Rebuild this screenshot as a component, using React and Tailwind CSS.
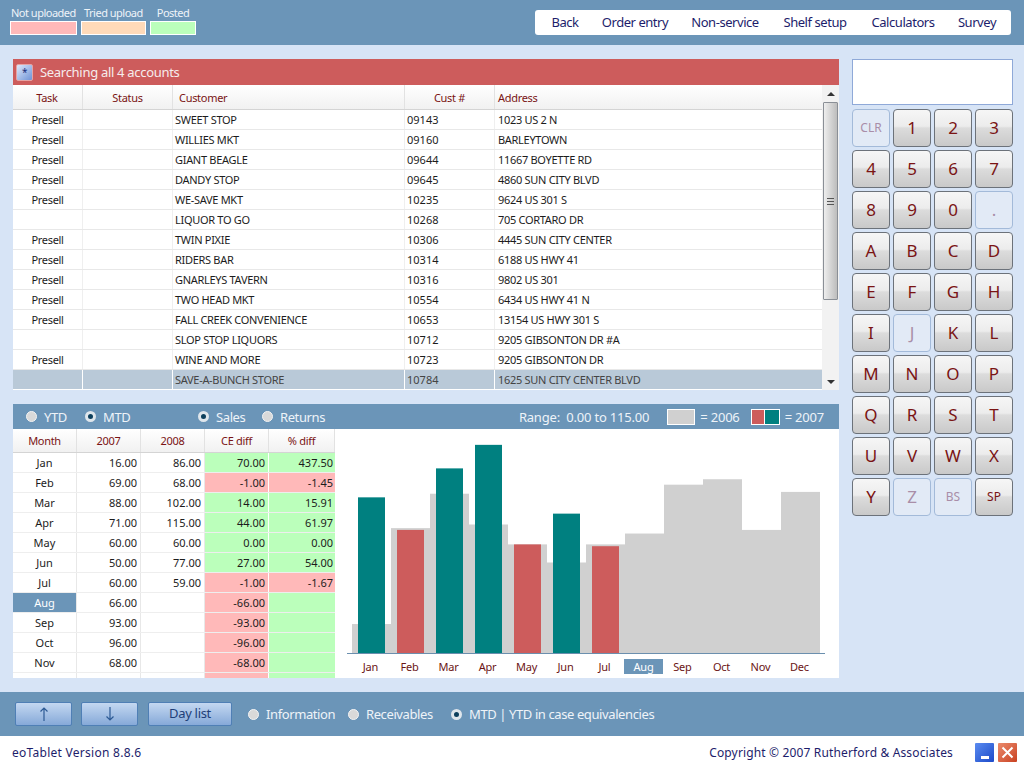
const rows = [
  ['Presell', 'SWEET STOP', '09143', '1023 US 2 N'],
  ['Presell', 'WILLIES MKT', '09160', 'BARLEYTOWN'],
  ['Presell', 'GIANT BEAGLE', '09644', '11667 BOYETTE RD'],
  ['Presell', 'DANDY STOP', '09645', '4860 SUN CITY BLVD'],
  ['Presell', 'WE-SAVE MKT', '10235', '9624 US 301 S'],
  ['', 'LIQUOR TO GO', '10268', '705 CORTARO DR'],
  ['Presell', 'TWIN PIXIE', '10306', '4445 SUN CITY CENTER'],
  ['Presell', 'RIDERS BAR', '10314', '6188 US HWY 41'],
  ['Presell', 'GNARLEYS TAVERN', '10316', '9802 US 301'],
  ['Presell', 'TWO HEAD MKT', '10554', '6434 US HWY 41 N'],
  ['Presell', 'FALL CREEK CONVENIENCE', '10653', '13154 US HWY 301 S'],
  ['', 'SLOP STOP LIQUORS', '10712', '9205 GIBSONTON DR #A'],
  ['Presell', 'WINE AND MORE', '10723', '9205 GIBSONTON DR'],
  ['', 'SAVE-A-BUNCH STORE', '10784', '1625 SUN CITY CENTER BLVD'],
];

const months = [
  ['Jan', '16.00', '86.00', '70.00', '437.50', 1],
  ['Feb', '69.00', '68.00', '-1.00', '-1.45', 0],
  ['Mar', '88.00', '102.00', '14.00', '15.91', 1],
  ['Apr', '71.00', '115.00', '44.00', '61.97', 1],
  ['May', '60.00', '60.00', '0.00', '0.00', 1],
  ['Jun', '50.00', '77.00', '27.00', '54.00', 1],
  ['Jul', '60.00', '59.00', '-1.00', '-1.67', 0],
  ['Aug', '66.00', '', '-66.00', '', 0],
  ['Sep', '93.00', '', '-93.00', '', 0],
  ['Oct', '96.00', '', '-96.00', '', 0],
  ['Nov', '68.00', '', '-68.00', '', 0],
  ['', '', '', '', '', 0],
];

const monthNames = ['Jan', 'Feb', 'Mar', 'Apr', 'May', 'Jun', 'Jul', 'Aug', 'Sep', 'Oct', 'Nov', 'Dec'];
const gray = [16, 69, 88, 71, 60, 50, 60, 66, 93, 96, 68, 89];
const cur = [86, 68, 102, 115, 60, 77, 59];
const keys = ['CLR', '1', '2', '3', '4', '5', '6', '7', '8', '9', '0', '.', 'A', 'B', 'C', 'D', 'E', 'F', 'G', 'H', 'I', 'J', 'K', 'L', 'M', 'N', 'O', 'P', 'Q', 'R', 'S', 'T', 'U', 'V', 'W', 'X', 'Y', 'Z', 'BS', 'SP'];
const disabled = ['CLR', '.', 'J', 'Z', 'BS'];

function Radio({ on, label, className = '' }) {
  return (
    <span className={`flex items-center gap-[7px] text-[13px] text-[#eef3f8] tracking-[-0.4px] ${className}`}>
      {on ? (
        <span className="w-[11px] h-[11px] rounded-full bg-[#0c3f5c] border-[3px] border-[#dfe6ec]" />
      ) : (
        <span className="w-[11px] h-[11px] rounded-full bg-[#d9d9d9] border border-[#f4f4f4]" />
      )}
      <span className="pt-[2px]">{label}</span>
    </span>
  );
}

function NavButton({ children, className }) {
  return (
    <div className={`h-[24px] flex items-center justify-center rounded-[2px] border border-[#4f7fb5] bg-gradient-to-b from-[#c4d8f1] to-[#86a9d8] text-[#1f3f78] text-[13px] tracking-[-0.3px] ${className}`}>
      {children}
    </div>
  );
}

function Arrow({ down }) {
  return (
    <svg width="12" height="16" viewBox="0 0 12 16" fill="none" stroke="#2d5a94" strokeWidth="1.2">
      {down ? <path d="M6 1v13M2.5 10.5L6 14l3.5-3.5" /> : <path d="M6 15V2M2.5 5.5L6 2l3.5 3.5" />}
    </svg>
  );
}

export default function App() {
  return (
    <div className="w-[1024px] h-[768px] flex flex-col overflow-hidden bg-[#d7e4f6] font-['Noto_Sans','DejaVu_Sans',sans-serif]">
      {/* top bar */}
      <div className="h-[45px] shrink-0 bg-[#6b95b8] flex items-start justify-between pl-[10px] pr-[13px]">
        <div className="flex gap-[4px] pt-[6px] tracking-[-0.5px]">
          <div className="w-[67px] flex flex-col">
            <span className="h-[15px] leading-[14px] text-[11px] text-[#eef3f8] whitespace-nowrap pl-[1px]">Not uploaded</span>
            <span className="h-[14px] bg-[#ffb9b9] border border-white" />
          </div>
          <div className="w-[65px] flex flex-col">
            <span className="h-[15px] leading-[14px] text-[11px] text-[#eef3f8] whitespace-nowrap pl-[3px]">Tried upload</span>
            <span className="h-[14px] bg-[#ffdab9] border border-white" />
          </div>
          <div className="w-[46px] flex flex-col">
            <span className="h-[15px] leading-[14px] text-[11px] text-[#eef3f8] text-center">Posted</span>
            <span className="h-[14px] bg-[#bbffbb] border border-white" />
          </div>
        </div>
        <nav className="mt-[10px] w-[476px] h-[25px] bg-white rounded-[3px] flex items-center text-[13px] text-[#1d1d6b] tracking-[-0.45px]">
          <span className="w-[60px] text-center">Back</span>
          <span className="w-[80px] text-center">Order entry</span>
          <span className="w-[100px] text-center">Non-service</span>
          <span className="w-[80px] text-center">Shelf setup</span>
          <span className="w-[96px] text-center">Calculators</span>
          <span className="w-[52px] text-center">Survey</span>
        </nav>
      </div>

      {/* main */}
      <div className="flex-1 flex pt-[14px] pl-[13px]">
        <div className="w-[826px] flex flex-col gap-[14px]">
          {/* accounts grid */}
          <div className="h-[331px] flex flex-col bg-white">
            <div className="h-[26px] bg-[#cd5c5c] flex items-center pl-[3px] gap-[7px] text-[13px] text-[#f6ecec] tracking-[-0.3px]">
              <span className="w-[17px] h-[17px] rounded-[2px] bg-gradient-to-br from-[#dfe8f8] to-[#6f93d6] border border-[#e6a3a3] flex items-center justify-center text-[10px] leading-none text-[#1a2f7a]">*</span>
              <span className="pt-[2px]">Searching all 4 accounts</span>
            </div>
            <div className="flex-1 flex min-h-0">
              <div className="flex-1 min-w-0 flex flex-col text-[11px] text-[#1c1c1c] tracking-[-0.3px]">
                <div className="h-[25px] grid grid-cols-[70px_90px_232px_90px_1fr] items-stretch bg-gradient-to-b from-white to-[#f1f1f1] border-b border-[#d4d4d4] text-[#7a1414]">
                  <span className="flex items-center justify-center pt-[2px] border-r border-[#e2e2e2] pr-[1px]">Task</span>
                  <span className="flex items-center justify-center pt-[2px] border-r border-[#e2e2e2]">Status</span>
                  <span className="flex items-center pl-[6px] pt-[2px] border-r border-[#e2e2e2]">Customer</span>
                  <span className="flex items-center justify-center pt-[2px] border-r border-[#e2e2e2]">Cust #</span>
                  <span className="flex items-center pl-[3px] pt-[2px]">Address</span>
                </div>
                {rows.map((r, i) => {
                  const sel = i === rows.length - 1;
                  const line = sel ? 'border-white' : 'border-[#efefef]';
                  return (
                    <div key={r[2]} className={`h-[20px] grid grid-cols-[70px_90px_232px_90px_1fr] items-stretch border-b ${sel ? 'bg-[#b9c9d8] text-[#444] border-white' : 'border-[#e8e8e8]'}`}>
                      <span className={`flex items-center justify-center pt-[2px] border-r ${line}`}>{r[0]}</span>
                      <span className={`border-r ${line}`} />
                      <span className={`flex items-center pl-[2px] pt-[2px] border-r ${line}`}>{r[1]}</span>
                      <span className={`flex items-center pl-[2px] pt-[2px] tracking-normal border-r ${line}`}>{r[2]}</span>
                      <span className="flex items-center pl-[3px] pt-[2px]">{r[3]}</span>
                    </div>
                  );
                })}
              </div>
              {/* scrollbar */}
              <div className="w-[17px] shrink-0 flex flex-col items-center bg-[#f2f2f2]">
                <div className="h-[17px] flex items-center justify-center">
                  <span className="w-0 h-0 border-x-[4px] border-x-transparent border-b-[4px] border-b-[#333]" />
                </div>
                <div className="w-[15px] h-[198px] rounded-[1px] border border-[#8a8f96] bg-gradient-to-r from-[#eeeeee] to-[#bdbdbd] flex items-center justify-center">
                  <span className="w-[7px] h-[7px] border-y border-[#555] flex items-center"><span className="w-full border-t border-[#555]" /></span>
                </div>
                <div className="flex-1" />
                <div className="h-[17px] flex items-center justify-center">
                  <span className="w-0 h-0 border-x-[4px] border-x-transparent border-t-[4px] border-t-[#333]" />
                </div>
              </div>
            </div>
          </div>

          {/* monthly panel */}
          <div className="h-[274px] flex flex-col bg-white">
            <div className="h-[25px] shrink-0 bg-[#6b95b8] flex items-center text-[13px] text-[#eef3f8]">
              <Radio label="YTD" className="ml-[13px] w-[59px]" />
              <Radio on label="MTD" className="w-[113px]" />
              <Radio on label="Sales" className="w-[64px]" />
              <Radio label="Returns" />
              <span className="ml-auto whitespace-pre pt-[2px] tracking-[-0.2px]">Range:  0.00 to 115.00</span>
              <span className="ml-[18px] w-[28px] h-[16px] bg-[#d0d0d0] border border-white" />
              <span className="ml-[5px] pt-[2px] tracking-[-0.2px]">= 2006</span>
              <span className="ml-[11px] flex h-[16px] border border-white">
                <span className="w-[13px] bg-[#cd5c5c] border-r border-white" />
                <span className="w-[14px] bg-[#008080]" />
              </span>
              <span className="ml-[5px] mr-[15px] pt-[2px] tracking-[-0.2px]">= 2007</span>
            </div>
            <div className="flex-1 flex min-h-0">
              <div className="w-[322px] shrink-0 overflow-hidden text-[11px] text-[#1c1c1c]">
                <div className="h-[24px] grid grid-cols-[64px_64px_64px_64px_66px] bg-gradient-to-b from-white to-[#f1f1f1] border-b border-[#d4d4d4] text-[#7a1414] tracking-[-0.3px]">
                  {['Month', '2007', '2008', 'CE diff', '% diff'].map((h) => (
                    <span key={h} className="flex items-center justify-center pt-[2px] border-r border-[#e2e2e2]">{h}</span>
                  ))}
                </div>
                {months.map((m, i) => {
                  const aug = m[0] === 'Aug';
                  const past = m[4] !== '';
                  return (
                    <div key={i} className="h-[20px] grid grid-cols-[64px_64px_64px_64px_66px] items-stretch border-b border-[#eeeeee]">
                      <span className={`flex items-center justify-center pt-[2px] border-r border-[#e8e8e8] ${aug ? 'bg-[#6b95b8] text-white' : ''}`}>{m[0]}</span>
                      <span className="flex items-center justify-end pt-[2px] pr-[3px] border-r border-[#e8e8e8]">{m[1]}</span>
                      <span className="flex items-center justify-end pt-[2px] pr-[3px] border-r border-[#e8e8e8]">{m[2]}</span>
                      <span className={`flex items-center justify-end pt-[2px] pr-[3px] border-r border-white ${m[5] ? 'bg-[#bbffbb]' : 'bg-[#ffb9b9]'}`}>{m[3]}</span>
                      <span className={`flex items-center justify-end pt-[2px] pr-[2px] ${past && !m[5] ? 'bg-[#ffb9b9]' : 'bg-[#bbffbb]'}`}>{m[4]}</span>
                    </div>
                  );
                })}
              </div>
              <div className="flex-1 flex flex-col min-w-0">
                <svg width="504" height="225" viewBox="0 0 504 225" className="block shrink-0">
                  {gray.map((v, i) => (
                    <rect key={i} x={17 + 39 * i} y={224 - v * 1.81} width="39" height={v * 1.81} fill="#d0d0d0" />
                  ))}
                  {cur.map((v, i) => (
                    <rect key={i} x={23 + 39 * i} y={224 - v * 1.81} width="27" height={v * 1.81} fill={v > gray[i] ? '#008080' : '#cd5c5c'} />
                  ))}
                  <line x1="12" x2="490" y1="224.5" y2="224.5" stroke="#6b8fae" />
                </svg>
                <div className="mt-[5px] ml-[16px] grid grid-cols-[repeat(12,39px)] text-[11px] text-[#6b1414] tracking-[-0.2px]">
                  {monthNames.map((m) => (
                    <span key={m} className={`h-[15px] leading-[15px] text-center ${m === 'Aug' ? 'bg-[#6b95b8] text-white' : ''}`}>{m}</span>
                  ))}
                </div>
              </div>
            </div>
          </div>
        </div>

        {/* keypad */}
        <div className="ml-[13px] w-[161px] flex flex-col gap-[4px]">
          <div className="h-[46px] bg-white border border-[#8fa9d8]" />
          <div className="grid grid-cols-[repeat(4,38px)] auto-rows-[38px] gap-[3px]">
            {keys.map((k) => {
              const off = disabled.includes(k);
              const small = k.length > 1;
              return (
                <div
                  key={k}
                  className={`flex items-center justify-center rounded-[4px] border pb-[1px] ${small ? 'text-[12px]' : 'text-[17px]'} ${
                    off
                      ? 'bg-[#e2eaf6] border-[#a3bad9] text-[#a98ea8]'
                      : 'border-[#6c727a] text-[#7a1414] bg-[linear-gradient(to_bottom,#f6f6f6_0%,#ececec_45%,#dcdcdc_50%,#c9c9c9_100%)]'
                  }`}
                >
                  {k}
                </div>
              );
            })}
          </div>
        </div>
      </div>

      {/* bottom bar */}
      <div className="h-[44px] shrink-0 bg-[#6b95b8] flex items-center pl-[15px]">
        <NavButton className="w-[57px]"><Arrow /></NavButton>
        <NavButton className="w-[57px] ml-[9px]"><Arrow down /></NavButton>
        <NavButton className="w-[84px] ml-[10px]">Day list</NavButton>
        <Radio label="Information" className="ml-[16px] w-[100px]" />
        <Radio label="Receivables" className="w-[103px]" />
        <Radio on label="MTD | YTD in case equivalencies" />
      </div>

      {/* footer */}
      <div className="h-[32px] shrink-0 bg-white flex items-center pl-[12px] pr-[7px] text-[12px] text-[#1d1d6b]">
        <span className="pt-[2px] tracking-[0.27px]">eoTablet Version 8.8.6</span>
        <span className="ml-auto pt-[2px] tracking-[0.15px]">Copyright © 2007 Rutherford &amp; Associates</span>
        <span className="ml-[22px] w-[19px] h-[19px] rounded-[1px] bg-gradient-to-br from-[#5b8bf0] to-[#1d49c9] flex items-end justify-center pb-[3px]">
          <span className="w-[8px] h-[3px] bg-white" />
        </span>
        <span className="ml-[4px] w-[19px] h-[19px] rounded-[1px] bg-gradient-to-br from-[#ea8a6c] to-[#c9401f] flex items-center justify-center">
          <svg width="13" height="13" viewBox="0 0 13 13" stroke="white" strokeWidth="2"><path d="M1.5 1.5l10 10M11.5 1.5l-10 10" /></svg>
        </span>
      </div>
    </div>
  );
}
